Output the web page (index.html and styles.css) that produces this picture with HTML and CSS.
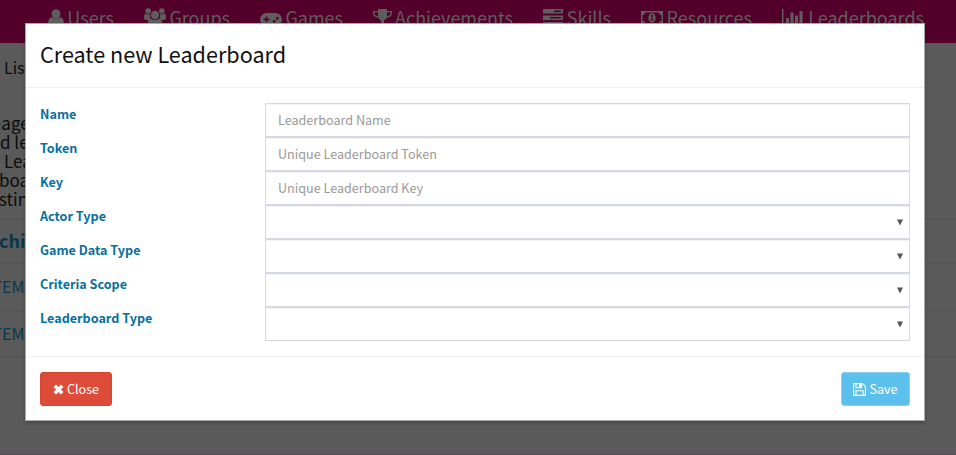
FILE: index.html
```html
<!DOCTYPE html>
<html lang="en">
<head>
<meta charset="utf-8">
<title>Create new Leaderboard</title>
<link rel="stylesheet" href="styles.css">
</head>
<body>
<div class="page">
  <nav class="nav">
    <a class="nav-item w-users"><svg width="16" height="18" viewBox="0 0 16 18"><circle cx="8" cy="4.7" r="4.5"/><path d="M4 8Q8 11 12 8Q16 9 16 15Q16 18 13 18H3Q0 18 0 15Q0 9 4 8z"/></svg><span>Users</span></a>
    <a class="nav-item w-groups"><svg width="22" height="19" viewBox="0 0 22 19"><circle cx="4.2" cy="3" r="2.8"/><circle cx="17.8" cy="3" r="2.8"/><circle cx="11" cy="7" r="4.2"/><path d="M1.5 5.5Q4 7 6 6V9Q6 10 6.500 10.500Q5 11 4 12H2Q0 12 0 10Q0 6 1.500 5.500zM20.500 5.500Q18 7 16 6V9Q16 10 15.500 10.500Q17 11 18 12H20Q22 12 22 10Q22 6 20.500 5.500zM7 10.500Q11 13.500 15 10.500Q18.500 11 18.500 16Q18.500 19 16 19H6Q3.500 19 3.500 16Q3.500 11 7 10.500z"/></svg><span>Groups</span></a>
    <a class="nav-item w-games"><svg class="pad" width="22" height="14" viewBox="0 0 22 14"><path fill-rule="evenodd" d="M6.500 0H15.500A6.500 6.500 0 0 1 15.500 13Q13 13 11.500 11H10.500Q9 13 6.500 13A6.500 6.500 0 0 1 6.500 0zM5.700 3.500V5.500H3.700V7.200H5.700V9.200H7.300V7.200H9.300V5.500H7.300V3.500zM13 7V9.500H15.500V7zM16 4V6.500H18.500V4z"/></svg><span>Games</span></a>
    <a class="nav-item w-achievements"><svg width="19" height="18" viewBox="0 0 19 18"><path fill-rule="evenodd" d="M5 0H14V2H19V4Q19 8 13.500 9Q12.500 10.500 11 11.500V14Q14 14.500 14 17H5Q5 14.500 8 14V11.500Q6.500 10.500 5.500 9Q0 8 0 4V2H5zM5 3.300H1.500Q1 6.500 5 7.500zM14 3.300V7.500Q18 6.500 17.500 3.300z"/></svg><span>Achievements</span></a>
    <a class="nav-item w-skills"><svg width="20" height="18" viewBox="0 0 20 18"><path fill-rule="evenodd" d="M0 0H20V4.500H0zM11 1.500V3H18V1.500zM0 6.500H20V11H0zM7 8V9.500H18V8zM0 13H20V17.500H0zM14 14.500V16H18V14.500z"/></svg><span>Skills</span></a>
    <a class="nav-item w-resources"><svg class="bill" width="22" height="14" viewBox="0 0 22 14"><path fill-rule="evenodd" d="M0 0H22V14H0zM4 1.500Q4 4 1.500 4V10Q4 10 4 12.500H18Q18 10 20.500 10V4Q18 4 18 1.500z"/><path fill-rule="evenodd" d="M11 2.300A3.700 4.700 0 0 1 11 11.700A3.700 4.700 0 0 1 11 2.300zM9.500 4.500V5.500H10.500V8.500H9.300V9.500H12.800V8.500H11.700V3.800H10.800z"/></svg><span>Resources</span></a>
    <a class="nav-item w-leaderboards"><svg width="23" height="18" viewBox="0 0 23 18"><path d="M0 0H1.500V16H23V17.500H0zM4 9H7V15H4zM8.500 3.500H11.500V15H8.500zM13 6.500H16V15H13zM17.500 2H20.500V15H17.500z"/></svg><span>Leaderboards</span></a>
  </nav>
  <div class="crumb">List</div>
  <div class="intro">
    <p class="i1">nage</p><p class="i2">d le</p><p class="i3">Lea</p><p class="i4">boa</p><p class="i5">stin</p>
  </div>
  <div class="table">
    <div class="cell head">chi</div>
    <div class="cell">TEMP</div>
    <div class="cell">TEMP</div>
  </div>
</div>
<div class="modal">
  <header class="modal-head"><h1>Create new Leaderboard</h1></header>
  <form class="fields">
    <div class="row"><label>Name</label><div class="control">Leaderboard Name</div></div>
    <div class="row"><label>Token</label><div class="control">Unique Leaderboard Token</div></div>
    <div class="row"><label>Key</label><div class="control">Unique Leaderboard Key</div></div>
    <div class="row"><label>Actor Type</label><div class="control select"><svg width="6" height="7" viewBox="0 0 6 7"><path d="M0 .5H6L3 6.500z"/></svg></div></div>
    <div class="row"><label>Game Data Type</label><div class="control select"><svg width="6" height="7" viewBox="0 0 6 7"><path d="M0 .5H6L3 6.500z"/></svg></div></div>
    <div class="row"><label>Criteria Scope</label><div class="control select"><svg width="6" height="7" viewBox="0 0 6 7"><path d="M0 .5H6L3 6.500z"/></svg></div></div>
    <div class="row"><label>Leaderboard Type</label><div class="control select"><svg width="6" height="7" viewBox="0 0 6 7"><path d="M0 .5H6L3 6.500z"/></svg></div></div>
  </form>
  <footer class="modal-foot">
    <button class="btn close"><svg width="11" height="11" viewBox="0 0 11 11"><path d="M1.800 1.800L9.200 9.200M9.200 1.800L1.800 9.200" fill="none" stroke="#fff" stroke-width="3.600"/></svg><span>Close</span></button>
    <button class="btn save"><svg width="13" height="13" viewBox="0 0 13 13"><path d="M.6.6H9.500L12.400 3.500V12.400H.6zM3 12V7.800H10V12M3 1V4.800H8.500V1" fill="none" stroke="#fff" stroke-width="1.100"/><path d="M6 1H8V4.200H6z" fill="#fff"/></svg><span>Save</span></button>
  </footer>
</div>
</body>
</html>
```
FILE: styles.css
```css
* { box-sizing: border-box; }
body { margin: 0; width: 956px; height: 455px; overflow: hidden; background: #5a5a5a; font-family: "Noto Sans CJK SC", "Open Sans", sans-serif; position: relative; }
h1, p { margin: 0; font-weight: 400; }
svg { flex: none; }
.page { height: 455px; overflow: hidden; border-bottom: 1px solid #504e50; }
.nav { height: 43px; background: #52002a; display: flex; gap: 30px; padding: 9px 0 0 48px; color: #5e5e5e; }
.nav-item { display: flex; justify-content: space-between; font-size: 18px; line-height: 20px; white-space: nowrap; flex: none; }
.nav-item svg { fill: #5e5e5e; }
.nav-item span { margin-top: -2px; }
.nav-item .pad { margin-top: 4px; }
.nav-item .bill { margin-top: 2px; }
.nav-item:nth-child(2) svg { margin-top: -1px; }
.w-users { width: 66px; }
.w-groups { width: 86px; }
.w-games { width: 83px; }
.w-achievements { width: 140px; }
.w-skills { width: 68px; }
.w-resources { width: 111px; }
.w-leaderboards { width: 142px; }
.crumb { font-size: 16px; line-height: 20px; height: 34px; padding: 14px 0 0 4px; color: #0b0b0b; }
.intro { margin-top: 36px; font-size: 17px; line-height: 19px; color: #0b0b0b; white-space: nowrap; }
.i1 { margin-left: -9px; }
.i3 { margin-left: 4px; }
.i4 { margin-left: -1px; }
.i5 { margin-left: -1px; }
.table { margin-top: 10px; }
.cell { height: 47px; border-top: 1px solid #535353; color: #07384b; font-size: 16px; line-height: 45px; white-space: nowrap; text-indent: -7.5px; }
.cell:last-child { border-bottom: 1px solid #535353; height: 48px; }
.cell.head { height: 45px; font-size: 18px; font-weight: 700; line-height: 43px; text-indent: -1px; }
.modal { position: absolute; left: 25px; top: 23px; width: 900px; height: 398px; background: #fff; border: 1px solid #aaa; box-shadow: 0 2px 4px rgba(0,0,0,.2); display: flex; flex-direction: column; }
.modal-head { height: 64px; border-bottom: 1px solid #f1f1f1; padding: 13px 14px; }
.modal-head h1 { font-size: 21.6px; line-height: 34px; color: #111; white-space: nowrap; }
.fields { height: 269px; padding: 15px 14px; border-bottom: 1px solid #f1f1f1; }
.row { display: flex; height: 34px; }
.row label { width: 225px; font-size: 12.6px; font-weight: 700; line-height: 22px; color: #07709f; }
.control { flex: 1; height: 34px; border: 1px solid #d5d8e2; border-right-color: #dddee5; padding-left: 12px; font-size: 12.6px; line-height: 31px; color: #999; box-shadow: inset 0 1px 0 #f1f3f7; }
.select { display: flex; justify-content: flex-end; align-items: center; padding-right: 6px; }
.select svg { fill: #555; }
.modal-foot { flex: 1; display: flex; justify-content: space-between; padding: 15px 14px 0; }
.btn { height: 34px; border-radius: 3px; color: #fff; font: 12.6px/20px "Noto Sans CJK SC", sans-serif; display: flex; align-items: center; justify-content: center; gap: 3px; padding: 0; }
.close { width: 72px; background: #dd4b39; border: 1px solid #d94431; }
.save { width: 69px; background: #5bc0eb; border: 1px solid #8bd1ed; }
```
